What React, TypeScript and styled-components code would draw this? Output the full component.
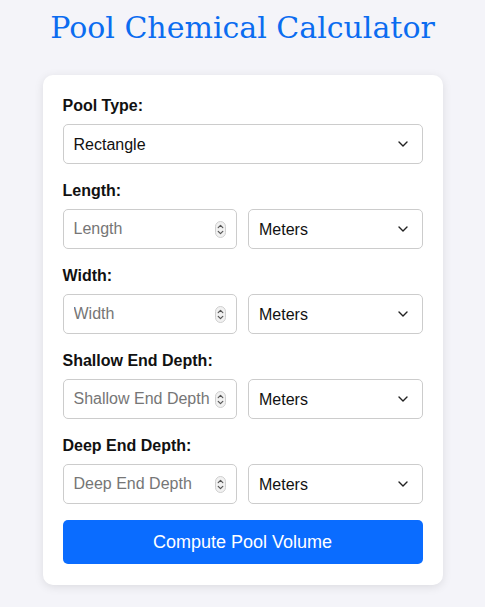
import React, { useState } from 'react';
import styled, { createGlobalStyle } from 'styled-components';

const GlobalStyle = createGlobalStyle`
  html, body {
    margin: 0;
    padding: 0;
    background: #f4f4f9;
    font-family: "Liberation Sans", Arial, sans-serif;
  }
`;

const Page = styled.div`
  display: flex;
  flex-direction: column;
  align-items: center;
  padding: 8px 0 22px;
`;

const Title = styled.h1`
  margin: 0 0 27px;
  font-family: "DejaVu Serif", "Liberation Serif", serif;
  font-weight: normal;
  font-size: 30px;
  line-height: 40px;
  color: #0b6cf0;
  text-align: center;
`;

const Card = styled.div`
  width: 400px;
  box-sizing: border-box;
  padding: 22px 20px 21px;
  background: #fff;
  border-radius: 10px;
  box-shadow: 0 2px 10px rgba(0, 0, 0, 0.1);
`;

const Field = styled.div`
  margin-bottom: 18px;
  &:last-of-type {
    margin-bottom: 16px;
  }
`;

const Label = styled.label`
  display: block;
  margin-bottom: 9px;
  font-size: 16px;
  font-weight: bold;
  color: #111;
`;

const Row = styled.div`
  display: grid;
  grid-template-columns: minmax(0, 1fr) minmax(0, 1fr);
  gap: 11px;
`;

const Box = styled.div`
  display: flex;
  align-items: center;
  height: 40px;
  box-sizing: border-box;
  border: 1px solid #ccc;
  border-radius: 5px;
  background: #fff;
  padding: 0 10px 0 10px;
`;

const Input = styled.input`
  flex: 1;
  min-width: 0;
  border: none;
  outline: none;
  padding: 0;
  font: inherit;
  font-size: 16px;
  color: #111;
  background: transparent;
  appearance: textfield;
  &::placeholder {
    color: #767676;
  }
  &::-webkit-inner-spin-button,
  &::-webkit-outer-spin-button {
    -webkit-appearance: none;
    margin: 0;
  }
`;

const Select = styled.select`
  flex: 1;
  min-width: 0;
  border: none;
  outline: none;
  padding: 0;
  font-family: inherit;
  font-size: 16px;
  color: #111;
  background: transparent;
  appearance: none;
`;

const Button = styled.button`
  display: block;
  width: 100%;
  height: 44px;
  border: none;
  border-radius: 5px;
  background: #0a6cff;
  color: #fff;
  font-family: "Liberation Sans", Arial, sans-serif;
  font-size: 18px;
  cursor: pointer;
`;

const Chevron = () => (
  <svg width="10" height="6" viewBox="0 0 10 6" style={{ flexShrink: 0, marginRight: 4 }}>
    <path d="M1 1l4 4 4-4" fill="none" stroke="#222" strokeWidth="1.4" strokeLinecap="round" strokeLinejoin="round" />
  </svg>
);

const Spinner = () => (
  <svg width="11" height="17" viewBox="0 0 11 17" style={{ flexShrink: 0, marginLeft: 4 }}>
    <rect x="0.5" y="0.5" width="10" height="16" rx="5" fill="#f1f1f1" stroke="#cfcfcf" />
    <path d="M3.2 6.6L5.5 4.3l2.3 2.3M3.2 10.4l2.3 2.3 2.3-2.3" fill="none" stroke="#555" strokeWidth="1.2" strokeLinecap="round" strokeLinejoin="round" />
  </svg>
);

const UnitSelect = () => (
  <Box>
    <Select defaultValue="meters">
      <option value="meters">Meters</option>
      <option value="feet">Feet</option>
    </Select>
    <Chevron />
  </Box>
);

const dims = ['Length', 'Width', 'Shallow End Depth', 'Deep End Depth'];

export default function App() {
  const [values, setValues] = useState<Record<string, string>>({});

  return (
    <>
      <GlobalStyle />
      <Page>
        <Title>Pool Chemical Calculator</Title>
        <Card>
          <Field>
            <Label>Pool Type:</Label>
            <Box>
              <Select defaultValue="rectangle">
                <option value="rectangle">Rectangle</option>
                <option value="round">Round</option>
                <option value="oval">Oval</option>
              </Select>
              <Chevron />
            </Box>
          </Field>
          {dims.map((d) => (
            <Field key={d}>
              <Label>{d}:</Label>
              <Row>
                <Box>
                  <Input
                    type="number"
                    placeholder={d}
                    value={values[d] || ''}
                    onChange={(e) => setValues({ ...values, [d]: e.target.value })}
                  />
                  <Spinner />
                </Box>
                <UnitSelect />
              </Row>
            </Field>
          ))}
          <Button>Compute Pool Volume</Button>
        </Card>
      </Page>
    </>
  );
}
